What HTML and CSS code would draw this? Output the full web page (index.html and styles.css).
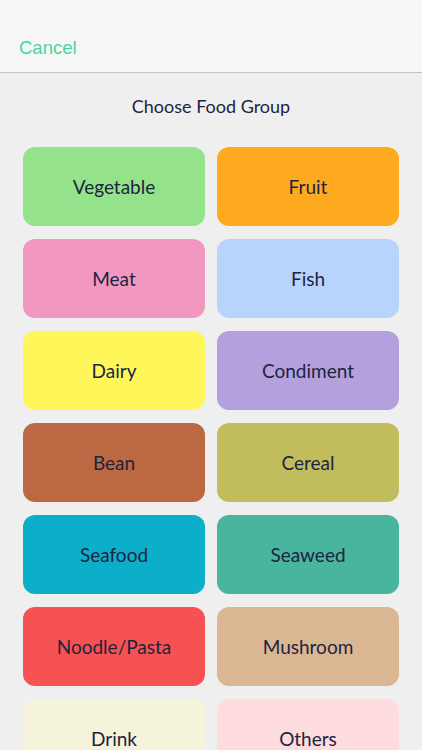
FILE: index.html
```html
<!DOCTYPE html>
<html lang="en">

<head>
    <meta charset="UTF-8">
    <meta name="viewport" content="width=device-width, initial-scale=1.0">
    <title>Choose Food Group</title>
    <link rel="stylesheet" href="styles.css">
</head>

<body>
    <div class="header">
        <button class="cancel">Cancel</button>
    </div>
    <div class="content">
        <div class="title">Choose Food Group</div>
        <div class="grid">
            <div class="box vegetable">Vegetable</div>
            <div class="box fruit">Fruit</div>
            <div class="box meat">Meat</div>
            <div class="box fish">Fish</div>
            <div class="box dairy">Dairy</div>
            <div class="box condiment">Condiment</div>
            <div class="box bean">Bean</div>
            <div class="box cereal">Cereal</div>
            <div class="box seafood">Seafood</div>
            <div class="box seaweed">Seaweed</div>
            <div class="box noodle">Noodle/Pasta</div>
            <div class="box mushroom">Mushroom</div>
            <div class="box drink">Drink</div>
            <div class="box others">Others</div>
        </div>
    </div>
</body>

</html>
```

FILE: styles.css
```css
* {
    margin: 0;
    padding: 0;
    box-sizing: border-box;
}

body {
    background-color: #efefef;
    width: 422px;
    height: 750px;
    overflow: hidden;
    font-family: Lato, "Noto Sans", sans-serif;
}

.header {
    height: 73px;
    background-color: #f6f6f6;
    border-bottom: 1px solid #c4c4c4;
    display: flex;
    align-items: flex-end;
    padding: 0 0 13px 19px;
}

.cancel {
    border: none;
    background: none;
    color: #4fd3a0;
    font-family: "Liberation Sans", Arial, sans-serif;
    font-size: 18.5px;
}

.content {
    padding: 0 23px;
}

.title {
    text-align: center;
    color: #1c2440;
    font-size: 18px;
    line-height: 22px;
    padding: 22px 0 30px;
}

.grid {
    display: grid;
    grid-template-columns: repeat(2, 1fr);
    grid-auto-rows: 79px;
    column-gap: 12px;
    row-gap: 13px;
}

.box {
    border-radius: 12px;
    display: flex;
    justify-content: center;
    align-items: center;
    font-size: 19px;
    color: #1c2440;
}

.vegetable { background-color: #94e28a; }
.fruit { background-color: #ffaa1e; }
.meat { background-color: #f298c0; }
.fish { background-color: #b9d4fc; }
.dairy { background-color: #fff65a; }
.condiment { background-color: #b5a0de; }
.bean { background-color: #bb6843; }
.cereal { background-color: #c2bd5c; }
.seafood { background-color: #0bafc9; }
.seaweed { background-color: #4ab59e; }
.noodle { background-color: #f55251; }
.mushroom { background-color: #dab692; }
.drink { background-color: #f5f3da; }
.others { background-color: #fedcdd; }
```
